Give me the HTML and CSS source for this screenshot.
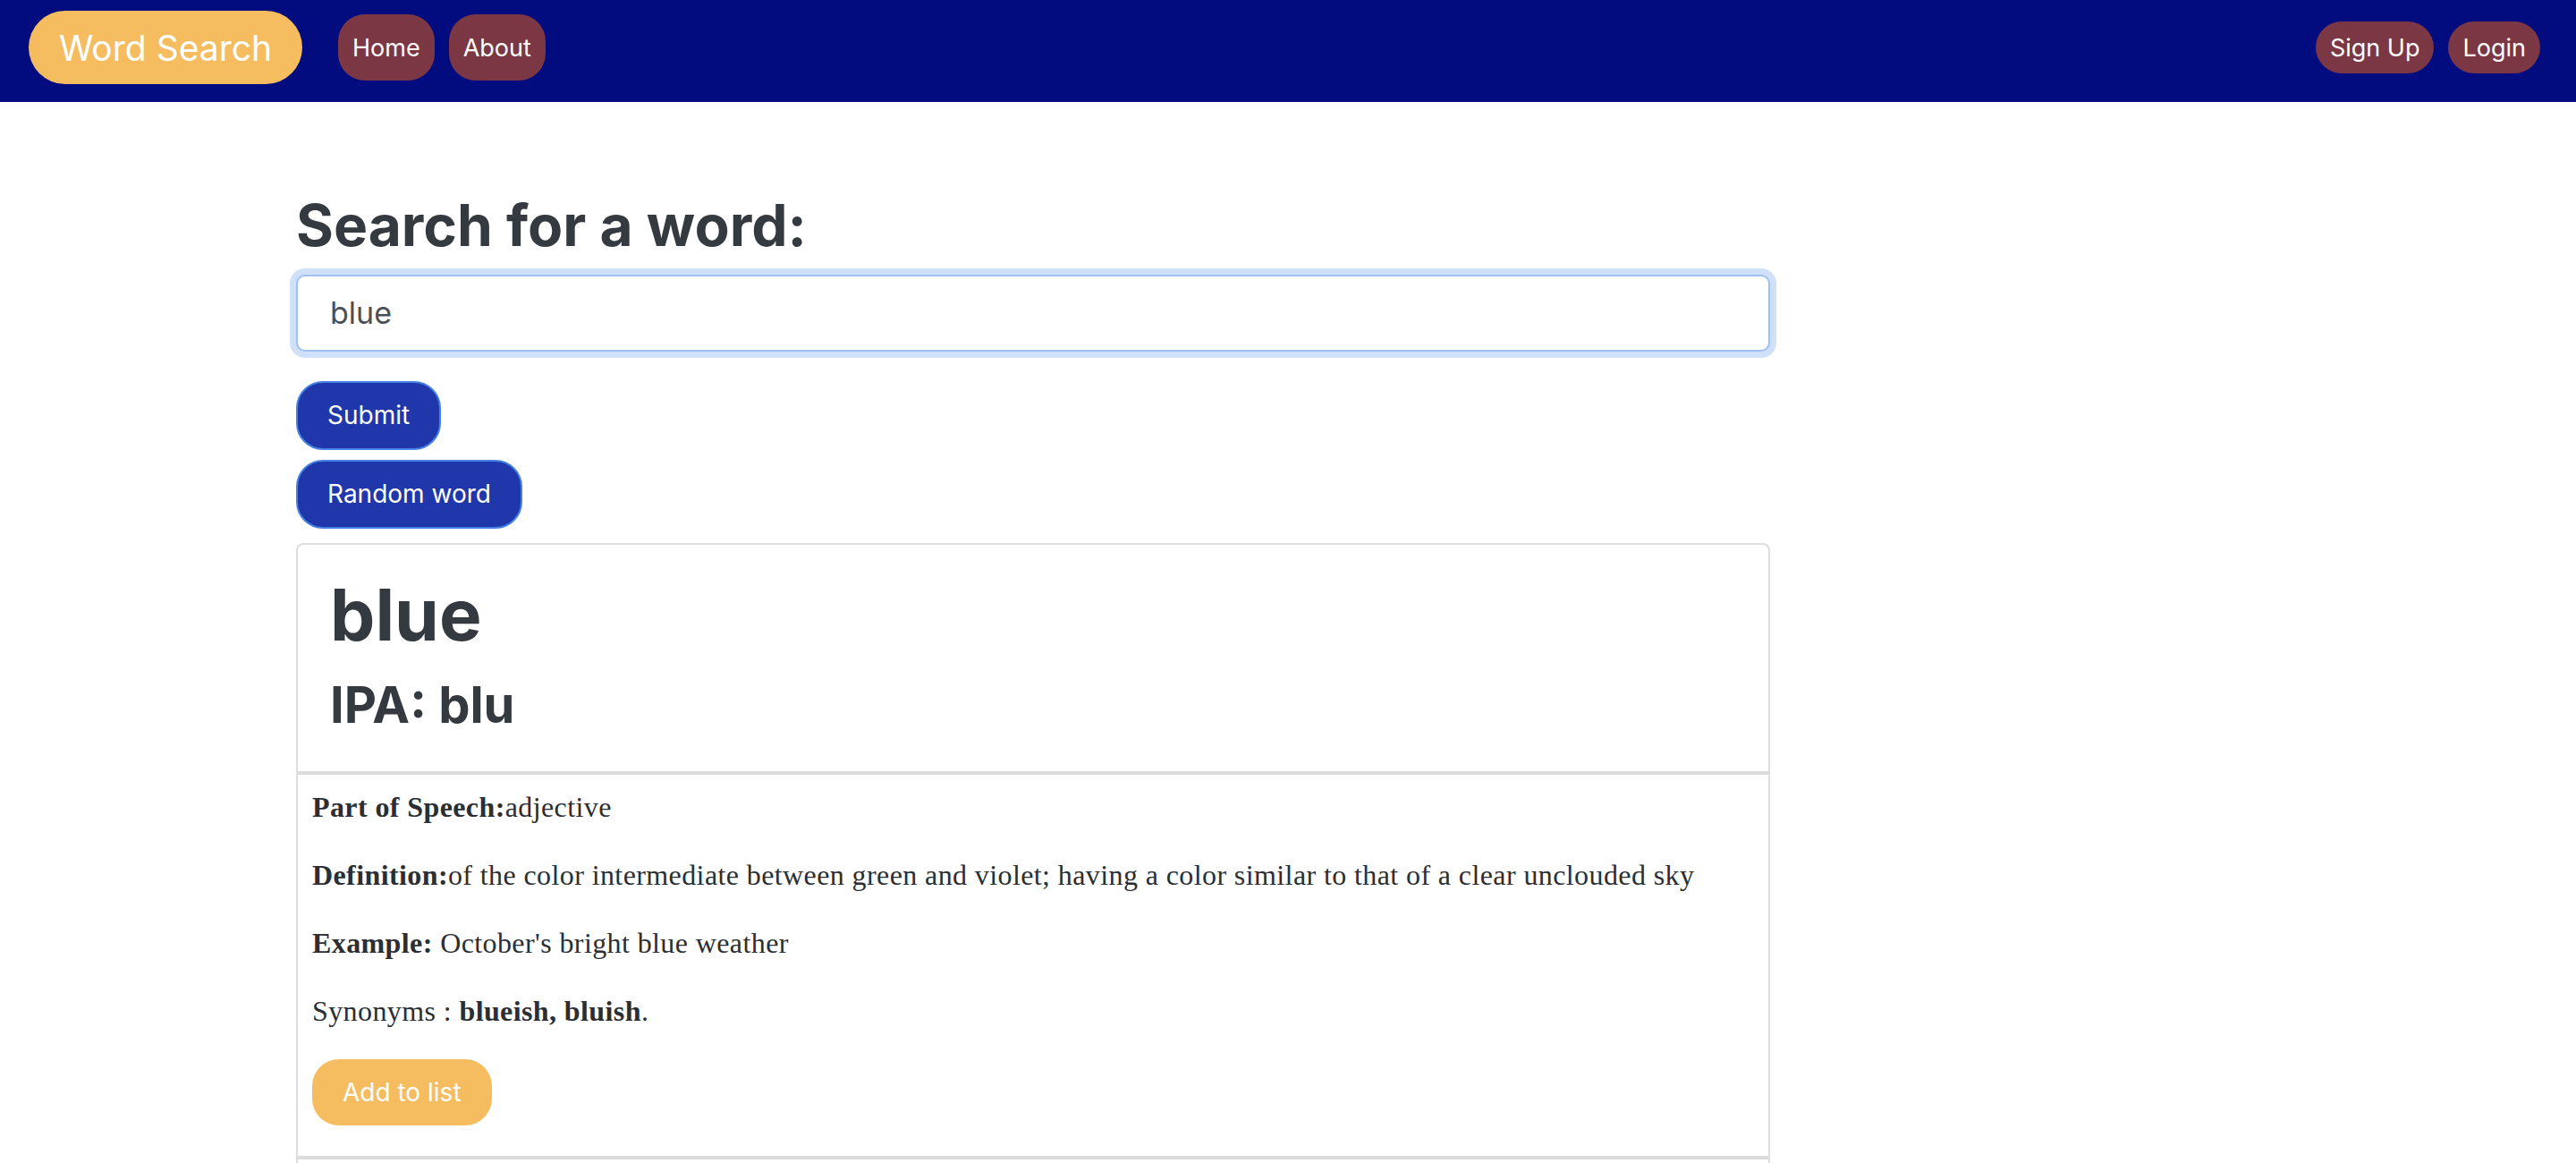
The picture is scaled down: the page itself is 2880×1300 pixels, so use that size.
FILE: index.html
```html
<!DOCTYPE html>
<html lang="en">
<head>
<meta charset="utf-8">
<title>Word Search</title>
<link rel="stylesheet" href="styles.css">
</head>
<body>
<nav class="navbar">
  <a class="brand" href="#">Word Search</a>
  <ul class="nav-links">
    <li><a class="nav-pill" href="#">Home</a></li>
    <li><a class="nav-pill" href="#">About</a></li>
  </ul>
  <ul class="nav-auth">
    <li><a class="auth-pill" href="#">Sign Up</a></li>
    <li><a class="auth-pill" href="#">Login</a></li>
  </ul>
</nav>
<main class="page">
  <div class="column">
    <h2 class="search-title">Search for a word:</h2>
    <form class="search-form">
      <input class="search-input" type="text" value="blue">
      <div class="actions">
        <button class="btn-blue" type="button">Submit</button>
        <button class="btn-blue" type="button">Random word</button>
      </div>
    </form>
    <section class="card">
      <header class="card-head">
        <h1 class="word">blue</h1>
        <h3 class="ipa">IPA: blu</h3>
      </header>
      <div class="card-body">
        <p><b>Part of Speech:</b>adjective</p>
        <p><b>Definition:</b>of the color intermediate between green and violet; having a color similar to that of a clear unclouded sky</p>
        <p><b>Example:</b> October's bright blue weather</p>
        <p>Synonyms : <b>blueish, bluish</b>.</p>
        <button class="btn-gold" type="button">Add to list</button>
      </div>
      <div class="card-more"></div>
    </section>
  </div>
</main>
</body>
</html>
```
FILE: styles.css
```css
* { box-sizing: border-box; }

html, body {
  margin: 0;
  padding: 0;
  background: #ffffff;
}

body {
  font-family: Inter, "Liberation Sans", sans-serif;
  color: #343a40;
}

ul { list-style: none; margin: 0; padding: 0; }
a { text-decoration: none; }

.navbar {
  height: 114px;
  background: #030c7e;
  display: flex;
  align-items: center;
  padding: 0 40px 8px 32px;
}

.brand {
  display: flex;
  align-items: center;
  justify-content: center;
  height: 82px;
  width: 306px;
  border-radius: 41px;
  background: #f6bd60;
  color: #ffffff;
  font-size: 39px;
  margin-right: 40px;
}

.nav-links {
  display: flex;
  gap: 16px;
}

.nav-pill {
  display: flex;
  align-items: center;
  height: 74px;
  padding: 0 16px;
  border-radius: 30px;
  background: #7b3744;
  color: #ffffff;
  font-size: 27px;
}

.nav-auth {
  display: flex;
  gap: 16px;
  margin-left: auto;
}

.auth-pill {
  display: flex;
  align-items: center;
  height: 58px;
  padding: 0 16px;
  border-radius: 29px;
  background: #7b3744;
  color: #ffffff;
  font-size: 27px;
}

.page {
  padding: 100px 0 0 331px;
}

.column {
  width: 1648px;
}

.search-title {
  margin: 0 0 16px;
  font-size: 64px;
  line-height: 1.2;
  font-weight: 700;
}

.search-form {
  margin: 0;
}

.search-input {
  display: block;
  width: 100%;
  height: 86px;
  padding: 0 36px;
  font-family: Inter, "Liberation Sans", sans-serif;
  font-size: 34px;
  color: #495057;
  background: #ffffff;
  border: 2px solid #9ec0f3;
  border-radius: 10px;
  box-shadow: 0 0 0 7px #d0e0f8;
  outline: none;
  margin-bottom: 33px;
}

.actions {
  display: flex;
  flex-direction: column;
  align-items: flex-start;
  gap: 11px;
  margin-bottom: 16px;
}

.btn-blue {
  height: 77px;
  padding: 0 33px;
  font-family: Inter, "Liberation Sans", sans-serif;
  font-size: 28px;
  color: #ffffff;
  background: #1f37ab;
  border: 2px solid #4682e4;
  border-radius: 30px;
}

.card {
  border: 2px solid #dedede;
  border-bottom: none;
  border-radius: 8px 8px 0 0;
}

.card-head {
  padding: 30px 36px 24px;
  border-bottom: 4px solid #dcdcdc;
}

.word {
  margin: 0 0 20px;
  font-size: 80px;
  line-height: 1.2;
  font-weight: 700;
}

.ipa {
  margin: 0 0 16px;
  font-size: 56px;
  line-height: 1.2;
  font-weight: 700;
}

.card-body {
  padding: 14px 16px 18px;
  border-bottom: 4px solid #dcdcdc;
  font-family: "Liberation Serif", serif;
  font-size: 32px;
  line-height: 44px;
  letter-spacing: 0.4px;
  color: #2b2f33;
}

.card-body p {
  margin: 0 0 32px;
}

.card-more {
  height: 60px;
}

.btn-gold {
  display: block;
  height: 74px;
  padding: 0 34px;
  margin: 0 0 16px;
  font-family: Inter, "Liberation Sans", sans-serif;
  font-size: 28px;
  letter-spacing: 0;
  color: #ffffff;
  background: #f6bd60;
  border: none;
  border-radius: 30px;
}
```
